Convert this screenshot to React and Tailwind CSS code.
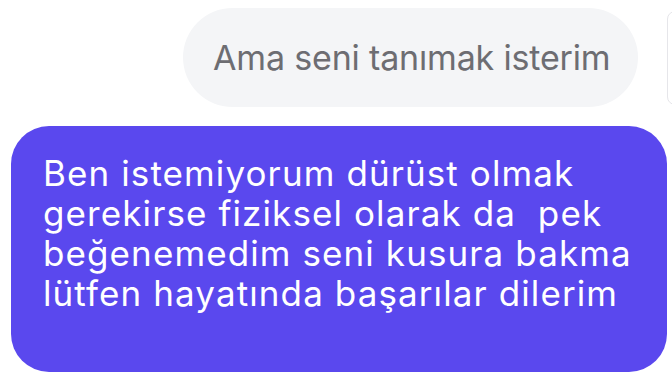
import React from 'react';

const FONT = { fontFamily: 'Inter, "Liberation Sans", Arial, sans-serif' };

// ===== INCOMING BUBBLE =====
function GrayBubble({ text }) {
  return (
    <div className="flex h-[99px] items-center rounded-full bg-[#f4f5f7] pl-[30px] pr-[30px]">
      <span className="whitespace-nowrap text-[34px] leading-none tracking-[-0.17px] text-[#6d6d72]">{text}</span>
    </div>
  );
}

// ===== OUTGOING BUBBLE =====
function PurpleBubble({ lines }) {
  return (
    <div className="h-[246px] rounded-[38px] bg-[#5a48ee] pl-[32px] pt-[27px]">
      {lines.map((line, i) => (
        <span key={i} className="block whitespace-pre text-[35px] leading-[40px] tracking-[1.1px] text-white">
          {line}
        </span>
      ))}
    </div>
  );
}

export default function App() {
  const lines = [
    'Ben istemiyorum dürüst olmak',
    'gerekirse fiziksel olarak da  pek',
    'beğenemedim seni kusura bakma',
    'lütfen hayatında başarılar dilerim',
  ];

  return (
    <div className="h-[378px] w-[672px] overflow-hidden bg-white" style={FONT}>
      <div className="flex items-center pt-[8px]">
        <div className="ml-[183px] w-[455px] shrink-0">
          <GrayBubble text="Ama seni tanımak isterim" />
        </div>
        <div className="ml-[29px] h-[94px] w-[20px] shrink-0 rounded-l-lg border border-[#e6e6ea]" />
      </div>
      <div className="ml-[11px] mr-[5px] mt-[19px]">
        <PurpleBubble lines={lines} />
      </div>
    </div>
  );
}
